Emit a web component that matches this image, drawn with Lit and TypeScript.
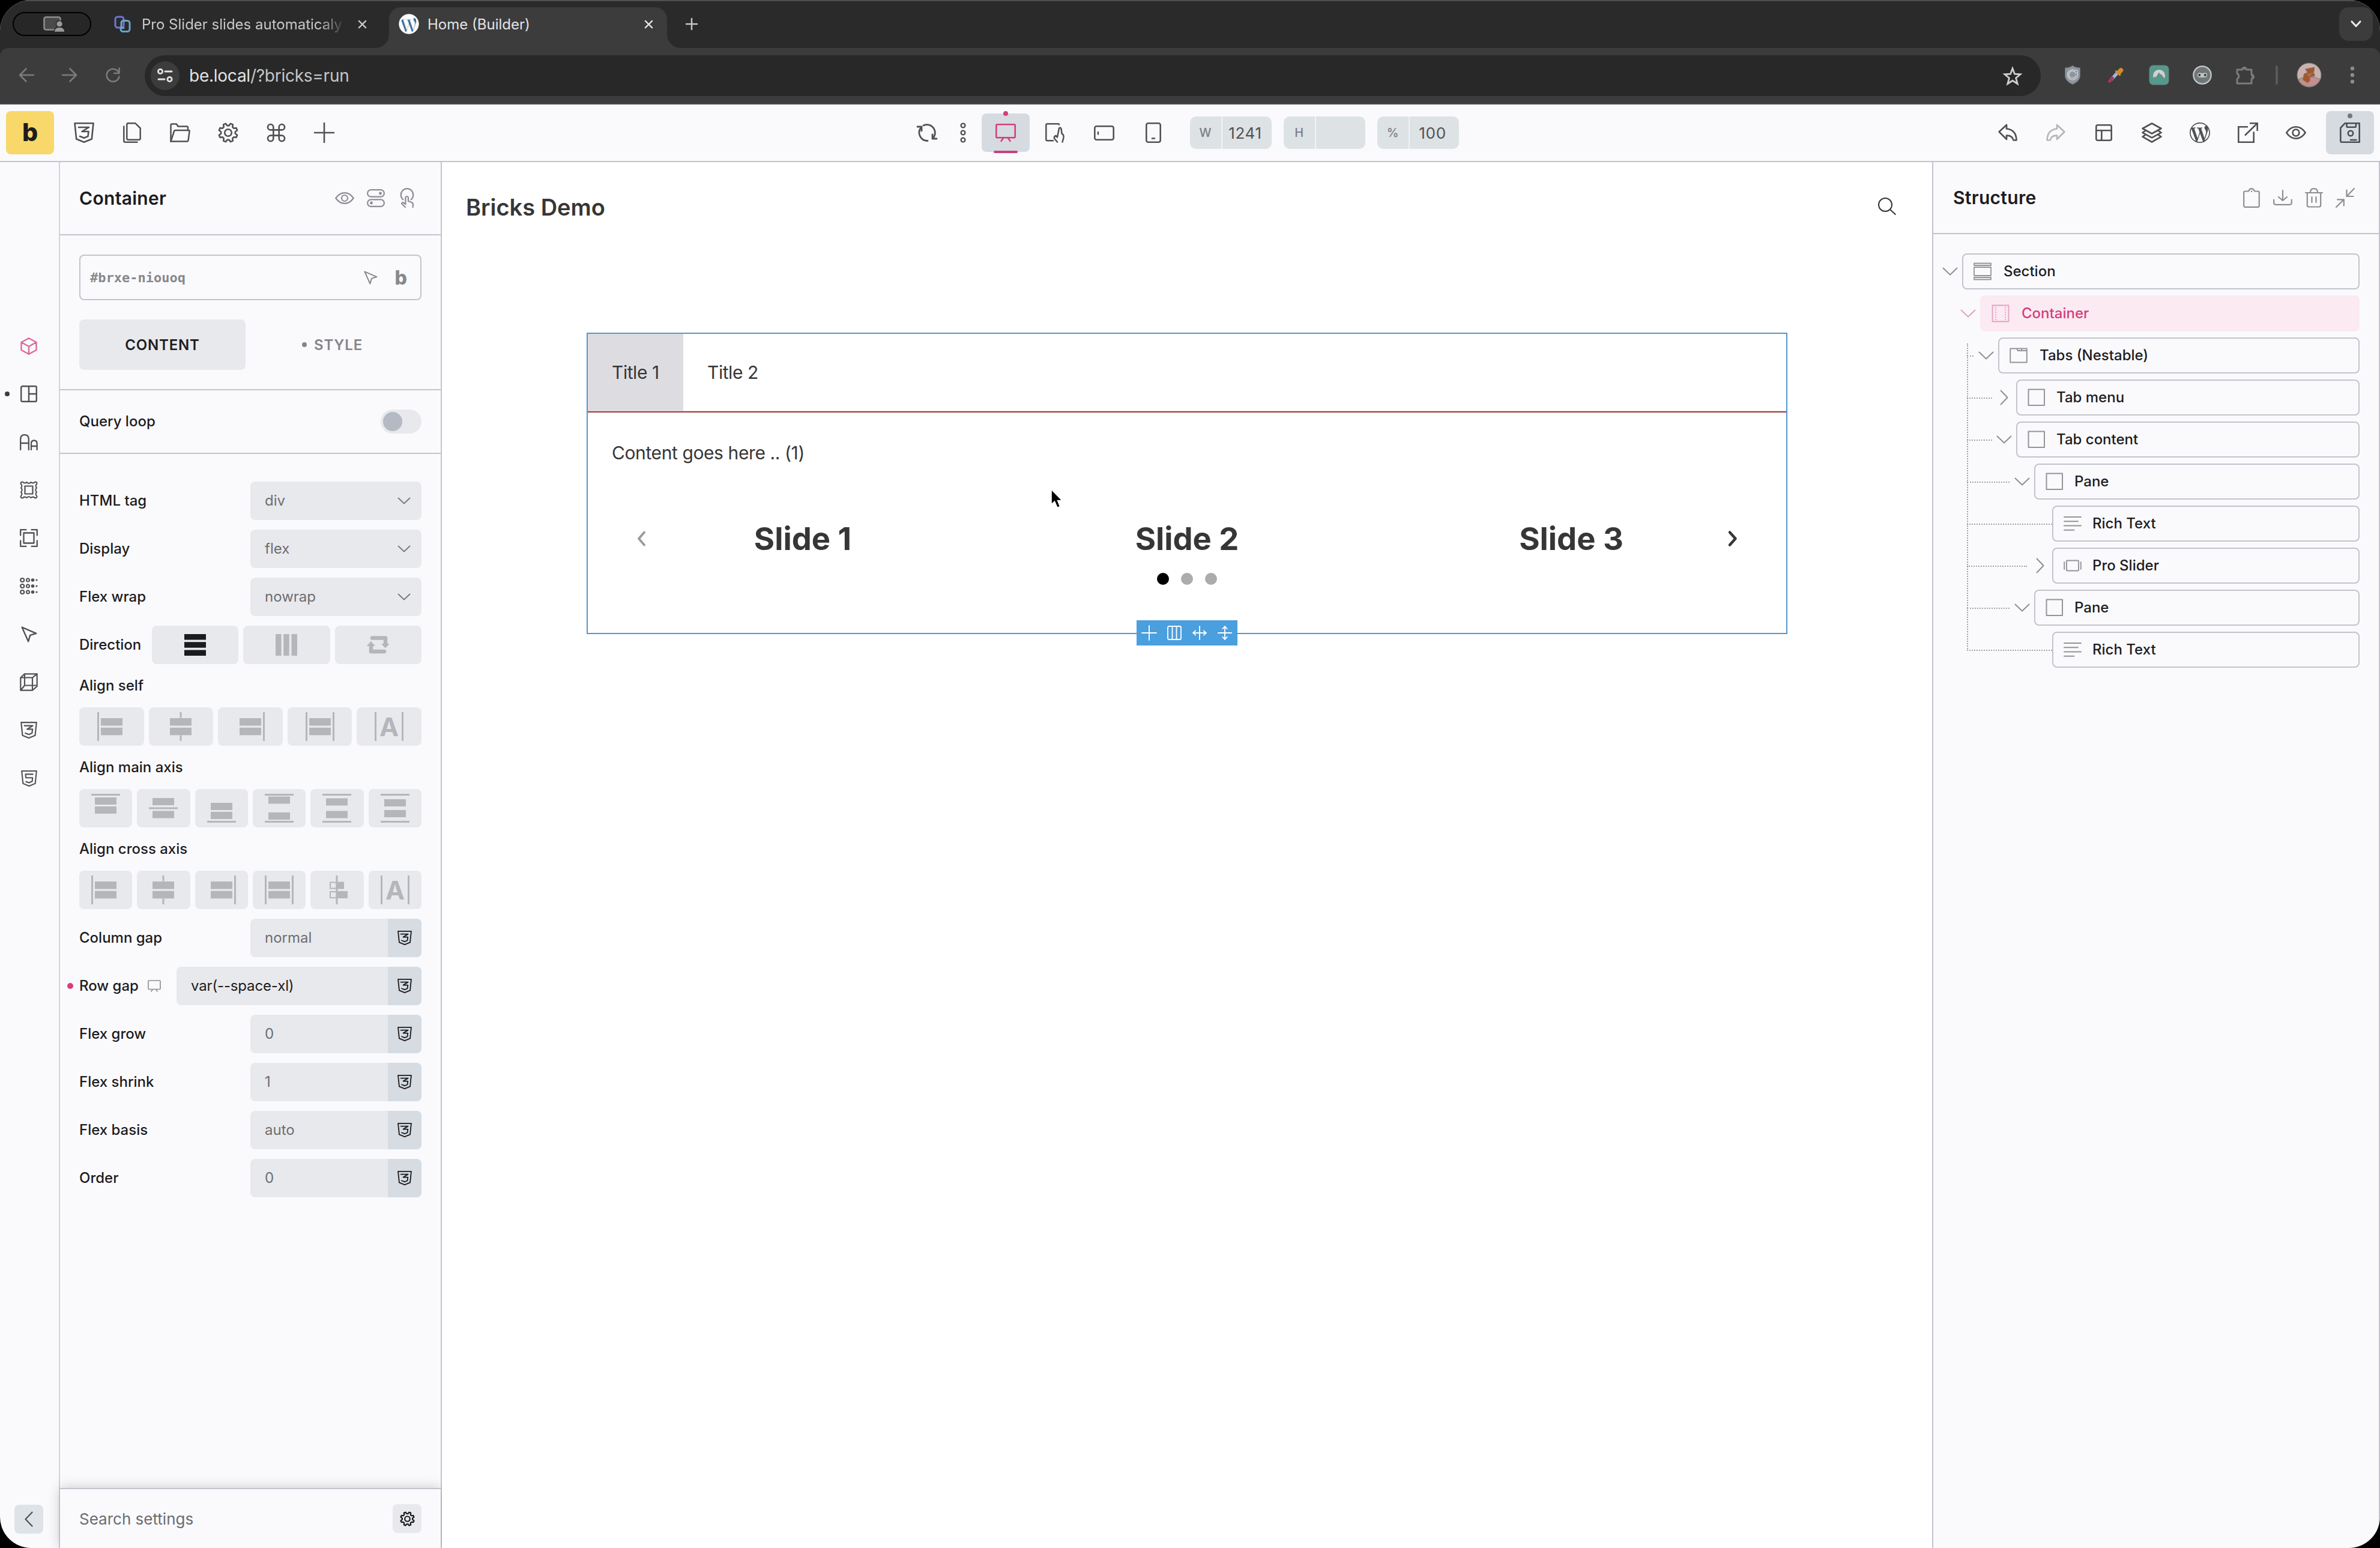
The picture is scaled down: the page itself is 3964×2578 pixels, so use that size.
import { LitElement, html, svg, css, nothing } from "lit";
import { customElement } from "lit/decorators.js";

type Glyph = [number, number, unknown];

/* Outline of a cog with rounded teeth, centred in a square box. */
const cog = (size: number, stroke: number) => {
  const c = size / 2;
  const outer = c - stroke / 2;
  const inner = outer - size * 0.11;
  const pts: string[] = [];
  for (let i = 0; i < 8; i++) {
    const a = (i * Math.PI) / 4 + Math.PI / 8;
    for (const [off, r] of [[-0.26, inner], [-0.13, outer], [0.13, outer], [0.26, inner]]) {
      pts.push(`${(c + Math.cos(a + off) * r).toFixed(2)} ${(c + Math.sin(a + off) * r).toFixed(2)}`);
    }
  }
  return svg`<path d="M${pts.join("L")}Z" stroke-width=${stroke}/><circle cx=${c} cy=${c} r=${size * 0.17} stroke-width=${stroke}/>`;
};

const WP = "M21.469 6.825c.84 1.537 1.318 3.3 1.318 5.175 0 3.979-2.156 7.456-5.363 9.325l3.295-9.527c.615-1.54.82-2.771.82-3.864 0-.405-.026-.78-.07-1.11m-7.981.105c.647-.03 1.232-.105 1.232-.105.582-.075.514-.93-.067-.899 0 0-1.755.135-2.88.135-1.064 0-2.85-.15-2.85-.15-.585-.03-.661.855-.075.885 0 0 .54.061 1.125.09l1.68 4.605-2.37 7.08L5.354 6.9c.649-.03 1.234-.1 1.234-.1.585-.075.516-.93-.065-.896 0 0-1.746.138-2.874.138-.2 0-.438-.008-.69-.015C4.911 3.15 8.235 1.215 12 1.215c2.809 0 5.365 1.072 7.286 2.833-.046-.003-.091-.009-.141-.009-1.06 0-1.812.923-1.812 1.914 0 .89.513 1.643 1.06 2.531.411.72.89 1.643.89 2.977 0 .915-.354 1.994-.821 3.479l-1.075 3.585-3.9-11.61.001.014zM12 22.784c-1.059 0-2.081-.153-3.048-.437l3.237-9.406 3.315 9.087c.024.053.05.101.078.149-1.12.393-2.325.609-3.582.609M1.211 12c0-1.564.336-3.05.935-4.39L7.29 21.709C3.694 19.96 1.212 16.271 1.211 12M12 0C5.385 0 0 5.385 0 12s5.385 12 12 12 12-5.385 12-12S18.615 0 12 0";

const ICONS: Record<string, Glyph> = {
  screen: [36, 26, svg`<rect x="1.5" y="1.5" width="27" height="21" rx="3" fill="#4a4a4a" stroke="#8e8e8e" stroke-width="2.5"/><circle cx="27" cy="13" r="5.5" fill="#9a9a9a" stroke="#272727" stroke-width="1.5"/><path d="M18 26.5c0-6 4-8.500 9-8.500s9 2.500 9 8.500z" fill="#9a9a9a" stroke="#272727" stroke-width="1.500"/>`],
  favicon: [28, 28, svg`<rect x="2" y="2" width="14" height="18" rx="4" stroke="#6f74d8" stroke-width="3"/><path d="M12 20v-8a3.500 3.500 0 0 1 3.500-3.500h6.500a4 4 0 0 1 4 4v10a4 4 0 0 1-4 4h-7a4 4 0 0 1-4-4v-2h5" stroke="#6ea3c8" stroke-width="3"/>`],
  wpBlue: [32, 32, svg`<circle cx="16" cy="16" r="16" fill="#fff"/><g transform="scale(1.3333)"><path d=${WP} fill="#2f6fa3"/></g><circle cx="16" cy="16" r="15" stroke="#fff" stroke-width="2"/>`],
  close: [16, 16, svg`<path d="M2 2L14 14M14 2L2 14" stroke-width="2.500"/>`],
  plusSm: [20, 20, svg`<path d="M10 1V19M1 10H19" stroke-width="2.500"/>`],
  back: [26, 24, svg`<path d="M25 12H2.500M12.500 1.500L2 12L12.500 22.500" stroke-width="2.600"/>`],
  forward: [26, 24, svg`<path d="M1 12H23.500M13.500 1.500L24 12L13.500 22.500" stroke-width="2.600"/>`],
  reload: [26, 26, svg`<path d="M23 9.500A10.500 10.500 0 1 0 23.500 15.500M23.500 1.500V10H15" stroke-width="2.600"/>`],
  tune: [26, 24, svg`<circle cx="5" cy="5" r="3.600" stroke-width="2.800"/><path d="M13 5H24M2 18H12" stroke-width="3"/><circle cx="20.500" cy="18" r="3.600" stroke-width="2.800"/>`],
  chevTop: [18, 12, svg`<path d="M2 2L9 9.500L16 2" stroke-width="3.200"/>`],
  star: [32, 31, svg`<path d="M16 3L19.500 12.200L29 12.800L21.600 19L24.200 28.500L16 23.200L7.800 28.500L10.400 19L3 12.800L12.500 12.200Z" stroke-width="2.800" stroke-linejoin="miter"/>`],
  shield: [26, 32, svg`<path d="M13 0.500C17 3 21 4 25.500 4V17C25.500 24 19 29 13 31.500C7 29 .5 24 .5 17V4C5 4 9 3 13 .5Z" fill="#8f959c" stroke="#6c7279" stroke-width="1"/><circle cx="13" cy="15.500" r="8.500" stroke="#c9ced4" stroke-width="1.600"/><path d="M17 11A6 6 0 1 0 18.500 17" stroke="#c9ced4" stroke-width="1.600"/><circle cx="19" cy="10.500" r="2.400" fill="#8f959c" stroke="#c9ced4" stroke-width="1.200"/>`],
  dropper: [28, 28, svg`<path d="M6 22L16 11" stroke="#9db8e6" stroke-width="5.500" stroke-linecap="butt"/><path d="M3.500 24.500L8.500 19" stroke="#a8365a" stroke-width="5"/><path d="M19 9.500L22.500 6" stroke="#d08b31" stroke-width="7.500"/><path d="M14.500 8L20.500 13.500" stroke="#d08b31" stroke-width="3.500"/>`],
  nord: [32, 32, svg`<rect width="32" height="32" rx="6" fill="#529a8b"/><path d="M7 22.500A12 12 0 0 1 5.500 17A10.500 10.500 0 0 1 26.500 17A12 12 0 0 1 25 22.500L19 14.500L17.500 17L16 12L10.500 21L9 19Z" fill="#cfd3d1"/>`],
  ninja: [32, 32, svg`<circle cx="16" cy="16" r="14.700" fill="#6d7679" stroke="#c7c9c9" stroke-width="2.200"/><path d="M7.500 16c0-3 2-4.200 4.500-4.200 1.500 0 2.500 1 4 1s2.500-1 4-1c2.500 0 4.500 1.200 4.500 4.200 0 2.500-1.500 4.200-4 4.200h-9c-2.500 0-4-1.700-4-4.200z" fill="#c7c9c9"/><circle cx="11.300" cy="16" r="1.900" fill="#222"/><circle cx="20.700" cy="16" r="1.900" fill="#222"/>`],
  puzzle: [34, 34, svg`<path d="M3 8H11.500A3.500 3.500 0 0 1 18.500 8H27V16.500A3.500 3.500 0 0 1 27 23.500V31H3V23.500A5 5 0 0 0 3 14.500Z" stroke-width="3"/><path d="M11.500 7A3.800 3.800 0 0 1 18.500 7ZM28 15.500A3.800 3.800 0 0 1 28 23Z" fill="currentColor" stroke-width="1"/>`],
  avatar: [40, 40, svg`<circle cx="20" cy="20" r="20" fill="#c9b2ae"/><path d="M1.500 27A20 20 0 0 0 38.500 27Q20 18 1.500 27Z" fill="#c48f8c"/><path d="M14 10L29 7L27.500 17L30 21L21 24L21.500 29L17.500 33L9.500 28L11.500 18L17 16Z" fill="#a9552b"/><path d="M17 19L26 16L20 23Z" fill="#c56d33"/>`],
  kebab: [8, 30, svg`<g fill="#8c8c8c" stroke="none"><circle cx="4" cy="4" r="3.200"/><circle cx="4" cy="15" r="3.200"/><circle cx="4" cy="26" r="3.200"/></g>`],

  css3: [34, 34, svg`<path d="M1.500 1.300H32.500L29.800 27.500L17 32.700L4.200 27.500Z" stroke-width="2.600"/><path d="M8 8H25L13.500 15H24.500L23.500 23L17 25.800L10 23" stroke-width="2.600"/>`],
  html5: [34, 34, svg`<path d="M1.500 1.300H32.500L29.800 27.500L17 32.700L4.200 27.500Z" stroke-width="2.600"/><path d="M25 8H9.500L10.200 15.500H24.200L23.500 23L17 25.800L10.500 23.500" stroke-width="2.600"/>`],
  pages: [30, 34, svg`<path d="M8.500 1.300H20.500L28.700 9.500V26.500Q28.700 28.700 26.500 28.700H8.500Q6.300 28.700 6.300 26.500V3.500Q6.300 1.300 8.500 1.300Z" stroke-width="2.500"/><path d="M1.300 6.500V30.500Q1.300 32.700 3.500 32.700H23.500" stroke-width="2.500"/>`],
  folder: [34, 32, svg`<path d="M1.500 30.500V3.500Q1.500 1.500 3.500 1.500H11L13.500 5.500H28Q30 5.500 30 7.500V12" stroke-width="2.500"/><path d="M1.500 30.500L7 13.500Q7.500 12 9 12H31.500Q33 12 32.600 13.500L30.500 29Q30.200 30.500 28.500 30.500Z" stroke-width="2.500"/>`],
  gear: [34, 34, cog(34, 2.600)],
  gearSm: [25, 25, cog(25, 2.200)],
  cmd: [30, 32, svg`<g transform="translate(-3.700 -2.700) scale(1.560)"><path d="M15 6v12a3 3 0 1 0 3-3H6a3 3 0 1 0 3 3V6a3 3 0 1 0-3 3h12a3 3 0 1 0-3-3" stroke-width="1.700"/></g>`],
  plus: [34, 34, svg`<path d="M17 0V34M0 17H34" stroke-width="2.600" stroke-linecap="butt"/>`],
  refresh: [34, 32, svg`<path d="M7.500 7A13.500 13.500 0 0 0 18 29.500M11 3.900A13.500 13.500 0 0 1 26.500 25.500" stroke-width="2.800"/><path d="M1 6H8V13M33 26H26V19" stroke-width="2.800"/>`],
  dots3: [10, 34, svg`<g stroke-width="2.400"><circle cx="5" cy="5" r="3.400"/><circle cx="5" cy="17" r="3.400"/><circle cx="5" cy="29" r="3.400"/></g>`],
  desktop: [34, 30, svg`<rect x="1.300" y="1.300" width="31.400" height="22" rx="1.800" stroke-width="2.600"/><path d="M13 24L9.500 29M21 24L24.500 29" stroke-width="2.400"/>`],
  tabletTouch: [32, 33, svg`<path d="M23 2.500Q23 1.300 21.500 1.300H3.500Q1.300 1.300 1.300 3.500V27Q1.300 29.300 3.500 29.300H13" stroke-width="2.500"/><path d="M20 31.500L15 25.500Q14 22.500 17.500 21L20 23.500L23 8.500Q25.500 6.500 26.500 9.500L27.500 17.500Q31 19 30.500 24L28.500 31.500" stroke-width="2.500"/>`],
  landscape: [34, 25, svg`<rect x="1.300" y="1.300" width="31.400" height="22.400" rx="3" stroke-width="2.600"/><path d="M7 11V14.500" stroke-width="2.400"/>`],
  phone: [26, 34, svg`<rect x="1.300" y="1.300" width="23.400" height="31.400" rx="3" stroke-width="2.600"/><path d="M11 26.500H15" stroke-width="2.600"/>`],
  undo: [32, 30, svg`<path d="M1.600 13.500L14 2V8.500C24 9 30.600 16 30.400 27.500H25.500C24 22 20 19.500 14 19.700V26Z" stroke-width="2.700"/>`],
  redo: [32, 30, svg`<path d="M30.400 13.500L18 2V8.500C8 9 1.400 16 1.600 27.500H6.500C8 22 12 19.500 18 19.700V26Z" stroke-width="2.700"/>`],
  layout: [28, 28, svg`<rect x="1.300" y="1.300" width="25.400" height="25.400" rx="2.500" stroke-width="2.600"/><path d="M1.300 10.200H26.700M10.300 10.200V26.700" stroke-width="2.600"/>`],
  layers: [34, 34, svg`<path d="M17 1.500L32.500 10L17 18.500L1.500 10Z" stroke-width="2.600"/><path d="M6.500 13.500L1.500 16.800L17 25.300L32.500 16.800L27.500 13.500M6.500 20.500L1.500 23.700L17 32.500L32.500 23.700L27.500 20.500" stroke-width="2.600"/>`],
  wp: [34, 34, svg`<g transform="scale(1.4167)"><path d=${WP} fill="currentColor" stroke="none"/></g>`],
  external: [34, 34, svg`<path d="M17 7.300H1.300V32.700H26.700V15.500M20 1.300H32.700V14M32.500 1.500L12 21.500" stroke-width="2.600" stroke-linejoin="miter" stroke-linecap="butt"/>`],
  eye: [34, 22, svg`<path d="M1.300 11C6 4 11 1.300 17 1.300S28 4 32.700 11C28 18 23 20.700 17 20.700S6 18 1.300 11Z" stroke-width="2.600"/><circle cx="17" cy="11" r="5.500" stroke-width="2.600"/>`],
  save: [34, 34, svg`<path d="M8.500 1.300H32.700V32.700H3.500Q1.300 32.700 1.300 30.500V9Z" stroke-width="2.600"/><path d="M11.500 1.500V6Q11.500 7.800 13.500 7.800H25Q27 7.800 27 6V1.500M18 29H27.500" stroke-width="2.600"/><circle cx="18" cy="18" r="4.200" stroke-width="2.600"/>`],

  eyeSm: [32, 20, svg`<path d="M1.200 10C5.500 4 10.500 1.200 16 1.200S26.500 4 30.800 10C26.500 16 21.500 18.800 16 18.800S5.500 16 1.200 10Z" stroke-width="2.200"/><circle cx="16" cy="10" r="5" stroke-width="2.200"/>`],
  toggles: [30, 30, svg`<rect x="1.100" y="1.100" width="27.800" height="11.600" rx="5.800" stroke-width="2.200"/><rect x="1.100" y="17.300" width="27.800" height="11.600" rx="5.800" stroke-width="2.200"/><circle cx="22.500" cy="7" r="2.400" fill="currentColor" stroke="none"/><circle cx="7.500" cy="23" r="2.400" fill="currentColor" stroke="none"/>`],
  tap: [24, 32, svg`<path d="M5.500 18.500A10.300 10.300 0 1 1 18.500 18.500" stroke-width="2.200"/><path d="M9 31L3 25Q3.500 22.500 6 23.500L9.500 26V14.500Q12 11.500 14 14.500V21L19.500 23Q22.500 24.500 22 27.500L21.500 31" stroke-width="2.200"/>`],
  cursor: [24, 24, svg`<path d="M1.500 1.500L22.500 10.500L13.500 13.200L10.800 22.500Z" stroke-width="2.100"/>`],
  chevDown: [22, 12, svg`<path d="M1.500 1.500L11 10.500L20.500 1.500" stroke-width="1.800"/>`],
  treeDown: [26, 14, svg`<path d="M1.500 1.500L13 12.500L24.500 1.500" stroke-width="2"/>`],
  treeRight: [14, 26, svg`<path d="M1.500 1.500L12.500 13L1.500 24.500" stroke-width="2"/>`],
  railBack: [14, 26, svg`<path d="M12.500 1.500L1.500 13L12.500 24.500" stroke-width="2.200"/>`],
  monitor: [22, 20, svg`<rect x="1" y="1" width="20" height="14.500" rx="1" stroke-width="1.700"/><path d="M8 16L6 19M14 16L16 19" stroke-width="1.700"/>`],

  cube: [28, 29, svg`<path d="M14 1.300L26.500 8V21L14 27.700L1.500 21V8ZM1.500 8L14 15L26.500 8M14 15V27.700" stroke-width="2.400"/>`],
  grid: [28, 28, svg`<rect x="1.200" y="1.200" width="25.600" height="25.600" rx="2" stroke-width="2.400"/><path d="M14 1.200V26.800M14 14H26.800" stroke-width="2.400"/>`],
  type: [30, 27, svg`<path d="M1.200 26V8.500Q1.200 1.200 8 1.200T14.800 8.500V26M1.200 15H14.800M19 26V15.500Q19 10.500 23.800 10.500T28.600 15.500V26M19 20H28.600" stroke-width="2.300"/>`],
  stamp: [30, 30, svg`<path d="M4.500 1.500Q8 5 11.500 2Q15 6 18.500 2Q22 5 25.500 1.500Q28.500 1.500 28.500 4.500Q25 8 28 11.500Q24.500 15 28 18.500Q25 22 28.500 25.500Q28.500 28.500 25.500 28.500Q22 25 18.500 28Q15 24.500 11.500 28Q8 25 4.500 28.500Q1.500 28.500 1.500 25.500Q5 22 2 18.500Q5.500 15 2 11.500Q5 8 1.500 4.500Q1.500 1.500 4.500 1.500Z" stroke-width="2"/><rect x="8.500" y="8.500" width="13" height="13" stroke-width="2.200"/>`],
  frame: [30, 30, svg`<path d="M1.200 10.500V1.200H10.500M19.500 1.200H28.800V10.500M28.800 19.500V28.800H19.500M10.500 28.800H1.200V19.500" stroke-width="2.300"/><rect x="6.500" y="6.500" width="17" height="17" stroke-width="2.300"/>`],
  dotGrid: [30, 28, svg`${[4, 14, 24].map((y) => svg`<circle cx="4.200" cy=${y} r="3" stroke-width="2.200"/><circle cx="13.500" cy=${y} r="2.500" stroke-width="2"/><circle cx="21.500" cy=${y} r="2.800" fill="currentColor" stroke="none"/><circle cx="28" cy=${y} r="1.600" fill="currentColor" stroke="none"/>`)}`],
  box3d: [30, 30, svg`<path d="M1.300 7.500H21V28.700H1.300ZM1.300 7.500L8 1.300H28.700V22L21 28.700M21 7.500L28.700 1.300M8 1.300V20.500H28.500M8 20.500L1.300 28.700" stroke-width="2.200"/>`],

  clipboard: [28, 33, svg`<path d="M3.500 5.500H8.500C9.500 5.500 10 1.200 14 1.200S18.500 5.500 19.500 5.500H24.500Q26.800 5.500 26.800 7.500V29.500Q26.800 31.800 24.500 31.800H3.500Q1.200 31.800 1.200 29.500V7.500Q1.200 5.500 3.500 5.500Z" stroke-width="2.200"/><circle cx="14" cy="5.800" r="1.300" fill="currentColor" stroke="none"/>`],
  download: [32, 26, svg`<path d="M16 1V17.500M9 12L16 18L23 12M1.200 16.500V21.500Q1.200 24.800 4.500 24.800H27.500Q30.800 24.800 30.800 21.500V16.500" stroke-width="2.200"/>`],
  trash: [30, 33, svg`<path d="M1 8H29M3.800 8V28.500Q3.800 31.500 6.500 31.500H23.500Q26.200 31.500 26.200 28.500V8M9 7.500C9 3 11.500 1.200 15 1.200S21 3 21 7.500M11.500 15V24M18.500 15V24" stroke-width="2.200"/>`],
  collapse: [32, 33, svg`<path d="M31 1L19 13.500M18.500 3.500V14H29.500M1 32L13.500 19.500M3 19.300H13.800V29.500" stroke-width="2.200" stroke-linejoin="miter"/>`],
  search: [30, 29, svg`<circle cx="12" cy="12" r="11" stroke-width="2"/><path d="M20 20L28.800 28" stroke-width="2"/>`],

  elSection: [32, 30, svg`<rect x="1" y="1.500" width="28" height="3.500" stroke-width="1.800"/><rect x="1" y="8" width="28" height="14" stroke-width="1.800"/><rect x="1" y="25" width="28" height="3.500" stroke-width="1.800"/>`],
  elContainer: [32, 30, svg`<rect x="1.500" y="1.500" width="27" height="27" stroke-width="1.800"/><path d="M7 4V27M23 4V27" stroke-width="1.800" stroke-dasharray="2 2" stroke-linecap="butt"/>`],
  elTabs: [32, 26, svg`<path d="M1.200 1.500H12L13.500 5H28.800V24.500H1.200ZM12 1.500H28.800V5M20 1.500V5" stroke-width="1.900"/>`],
  elBlock: [30, 30, svg`<rect x="1.500" y="1.500" width="26.500" height="26.500" stroke-width="2"/>`],
  elText: [30, 26, svg`<path d="M1 2H29M1 9.300H24M1 16.500H29M1 23.800H17.500" stroke-width="1.900"/>`],
  elSlider: [30, 20, svg`<rect x="5" y="1.500" width="20" height="17" rx="1" stroke-width="1.900"/><path d="M1.200 4V16M28.800 4V16" stroke-width="1.900"/>`],

  rows: [36, 36, svg`<g fill="currentColor" stroke="none"><rect width="36" height="9.500"/><rect y="13.200" width="36" height="9.500"/><rect y="26.500" width="36" height="9.500"/></g>`],
  cols: [36, 36, svg`<g fill="currentColor" stroke="none"><rect width="9.500" height="36"/><rect x="13.200" width="9.500" height="36"/><rect x="26.500" width="9.500" height="36"/></g>`],
  swap: [36, 32, svg`<path d="M8 4.500H30V16M28 27H6V17" stroke-width="6.500"/><path d="M24 14.500H36L30 20.500ZM0 17.500H12L6 10.500Z" fill="currentColor" stroke-width="1"/>`],

  tbPlus: [26, 26, svg`<path d="M13 0V26M0 13H26" stroke-width="2"/>`],
  tbCols: [24, 24, svg`<rect x="1" y="1" width="22" height="22" rx="2" stroke-width="1.800"/><path d="M8.500 1V23M15.500 1V23" stroke-width="1.800"/>`],
  tbH: [26, 26, svg`<path d="M13 1V25M1 13H25M5.500 9L1.500 13L5.500 17M20.500 9L24.500 13L20.500 17" stroke-width="2"/>`],
  tbV: [26, 26, svg`<path d="M1 13H25M13 1V25M9 5.500L13 1.500L17 5.500M9 20.500L13 24.500L17 20.500" stroke-width="2"/>`],
  slidePrev: [14, 26, svg`<path d="M12 2.500L3 13L12 23.500" stroke-width="3.800"/>`],
  slideNext: [16, 26, svg`<path d="M3 2.500L12.500 13L3 23.500" stroke-width="4.500"/>`],
};

const icon = (name: string, w?: number) => {
  const [vw, vh, body] = ICONS[name];
  const width = w ?? vw;
  return html`<svg class="ico" width=${width} height=${(width * vh) / vw} viewBox="0 0 ${vw} ${vh}" fill="none" stroke="currentColor" stroke-linecap="round" stroke-linejoin="round">${body}</svg>`;
};

/* Alignment glyphs: filled blocks and guide lines, given as [x, y, w, h] on a 48px square. */
type Rect = [number, number, number, number];
const ALIGN: Record<string, Rect[]> = {
  start: [[0, 0, 3, 48], [6, 10, 36, 12.500], [6, 25.800, 36, 12.500]],
  center: [[22.500, 0, 3, 9.500], [22.500, 38.500, 3, 9.500], [6, 10, 36, 12.500], [6, 25.800, 36, 12.500]],
  end: [[45, 0, 3, 48], [6, 10, 36, 12.500], [6, 25.800, 36, 12.500]],
  stretch: [[0, 0, 3, 48], [45, 0, 3, 48], [6, 10, 36, 12.500], [6, 25.800, 36, 12.500]],
  letter: [[0, 0, 3, 48], [45, 0, 3, 48]],
  top: [[0, 0, 48, 3], [6, 6, 36, 12], [6, 21, 36, 12]],
  middle: [[0, 22.500, 48, 3], [6, 7, 36, 12], [6, 28.500, 36, 12]],
  bottom: [[0, 45, 48, 3], [6, 15, 36, 12], [6, 30, 36, 12]],
  between: [[0, 0, 48, 3], [0, 45, 48, 3], [6, 4.500, 36, 12], [6, 31, 36, 12]],
  around: [[0, 0, 48, 3], [0, 45, 48, 3], [6, 7.500, 36, 12], [6, 28.500, 36, 12]],
  evenly: [[0, 0, 48, 3], [0, 45, 48, 3], [6, 9, 36, 12], [6, 27, 36, 12]],
  baseline: [[22.500, 0, 3, 48], [24, 10.500, 12, 12], [24, 26, 18, 12]],
};
const alignIcon = (name: string) => html`<svg class="ico" width="48" height="48" viewBox="0 0 48 48">
  ${ALIGN[name].map(([x, y, w, h]) => svg`<rect x=${x} y=${y} width=${w} height=${h} fill="#b4b6ba"/>`)}
  ${name === "letter" ? svg`<text class="alpha" x="24" y="40" text-anchor="middle">A</text>` : nothing}
  ${name === "baseline" ? svg`<g fill="none" stroke="#b4b6ba" stroke-width="2"><rect x="13" y="11.500" width="10.500" height="10"/><rect x="13" y="27" width="10.500" height="10"/></g>` : nothing}
</svg>`;

interface Node { depth: number; label: string; icon: string; open?: boolean; active?: boolean; }
const TREE: Node[] = [
  { depth: 0, label: "Section", icon: "elSection", open: true },
  { depth: 1, label: "Container", icon: "elContainer", open: true, active: true },
  { depth: 2, label: "Tabs (Nestable)", icon: "elTabs", open: true },
  { depth: 3, label: "Tab menu", icon: "elBlock", open: false },
  { depth: 3, label: "Tab content", icon: "elBlock", open: true },
  { depth: 4, label: "Pane", icon: "elBlock", open: true },
  { depth: 5, label: "Rich Text", icon: "elText" },
  { depth: 5, label: "Pro Slider", icon: "elSlider", open: false },
  { depth: 4, label: "Pane", icon: "elBlock", open: true },
  { depth: 5, label: "Rich Text", icon: "elText" },
];

@customElement("app-root")
export class AppRoot extends LitElement {
  static styles = css`
    :host { display: block; width: 3964px; height: 2578px; background: #000; overflow: hidden;
      font-family: Inter, "Liberation Sans", sans-serif; font-size: 24px; color: #1c1c1e; }
    * { box-sizing: border-box; }
    .ico { display: block; flex: none; overflow: visible; }
    .window { height: 2578px; border-radius: 52px; overflow: hidden; display: flex; flex-direction: column; background: #fafafd; }

    .strip { height: 80px; flex: none; background: #2a2a2a; box-shadow: inset 0 2px 0 #4f4f4f; display: flex; align-items: center; color: #c8c8c8; padding: 0 12px 0 21px; }
    .pill { width: 131px; height: 40px; border: 2px solid #000; border-radius: 20px; background: #272727; display: flex; align-items: center; justify-content: center; padding-left: 6px; }
    .tab { display: flex; align-items: center; height: 68px; margin-top: 12px; padding-bottom: 12px; }
    .tab.idle { margin-left: 16px; width: 480px; padding-left: 22px; }
    .tab-title { margin-left: 18px; white-space: nowrap; }
    .idle .tab-title { width: 340px; -webkit-mask-image: linear-gradient(90deg, #000 296px, rgba(0,0,0,.15) 334px); }
    .idle .x { margin-left: 20px; }
    .tab.active { position: relative; width: 463px; background: #3c3c3c; border-radius: 20px 20px 0 0; padding-left: 17px; color: #e3e3e3; }
    .tab.active::before, .tab.active::after { content: ""; position: absolute; bottom: 0; width: 22px; height: 22px; }
    .tab.active::before { left: -22px; background: radial-gradient(circle at 0 0, transparent 21.5px, #3c3c3c 22px); }
    .tab.active::after { right: -22px; background: radial-gradient(circle at 100% 0, transparent 21.5px, #3c3c3c 22px); }
    .active .tab-title { margin-left: 15px; flex: 1; }
    .active .x { margin-right: 23px; }
    .new { margin-left: 31px; flex: 1; }
    .tab-menu { width: 56px; height: 56px; border-radius: 16px; background: #3c3c3c; display: flex; align-items: center; justify-content: center; color: #e8e8e8; }

    .nav-bg { flex: none; background: #2a2a2a; }
    .nav { height: 94px; background: #3c3c3c; border-radius: 14px 14px 0 0; border-bottom: 2px solid #484848; display: flex; align-items: center; color: #7b7b7b; padding: 0 0 2px 31px; }
    .nav .fw { margin-left: 46px; } .nav .rl { margin-left: 46px; }
    .omni { margin-left: 40px; margin-top: 2px; width: 3158px; height: 68px; border-radius: 34px; background: #282828; display: flex; align-items: center; padding-left: 10px; color: #c6c6c6; font-size: 28px; letter-spacing: -0.25px; }
    .site { width: 48px; height: 48px; border-radius: 50%; background: #3c3c3c; display: flex; align-items: center; justify-content: center; color: #e3e3e3; margin-right: 16px; }
    .host { color: #e3e3e3; }
    .url { flex: 1; }
    .star { margin-right: 31px; color: #cfcfcf; }
    .ext { display: flex; align-items: center; padding-left: 17px; }
    .ext > span { width: 72px; display: flex; justify-content: center; }
    .sep { width: 4px; height: 32px; border-radius: 2px; background: #5a5a5a; margin: 0 32px 0 14px; }
    .kb { margin-left: 48px; }

    .bar { height: 96px; flex: none; border-bottom: 2px solid #c3c4cc; display: flex; align-items: center; color: #505154; background: #fafafd; }
    .logo { width: 80px; height: 72px; margin: 0 10px; border-radius: 8px; background: #f8d86a; display: flex; align-items: center; justify-content: center; color: #1d1d1b; font-weight: 800; font-size: 41px; padding-bottom: 2px; }
    .btn { width: 80px; height: 64px; display: flex; align-items: center; justify-content: center; flex: none; }
    .mid { display: flex; align-items: center; margin-left: 924px; }
    .mid .dots { width: 40px; margin-right: 11px; }
    .mid .gap { margin-right: 2px; }
    .sel { position: relative; background: #d6dae1; border-radius: 8px; color: #d23f7c; }
    .sel::before { content: ""; position: absolute; width: 8px; height: 8px; border-radius: 50%; background: #d23f7c; left: 36px; top: -4px; }
    .sel::after { content: ""; position: absolute; width: 40px; height: 4px; border-radius: 2px; background: #c9407b; left: 20px; bottom: -2px; }
    .dims { display: flex; gap: 20px; margin-left: 21px; }
    .dim { width: 136px; height: 54px; border-radius: 10px; background: #dde2e5; display: flex; font-size: 26px; letter-spacing: 0.7px; }
    .dim b { width: 54px; display: flex; align-items: center; justify-content: center; font-weight: 500; font-size: 20px; color: #7c7f84; border-right: 2px solid #f1f3f5; }
    .dim span { flex: 1; display: flex; align-items: center; justify-content: center; padding-right: 6px; }
    .right { display: flex; margin-left: auto; margin-right: 10px; align-items: center; }
    .dis { color: #b5b6b9; }
    .saveb { position: relative; height: 72px; margin-left: 10px; background: #d6dae1; border-radius: 8px; color: #4b4e57; }
    .saveb::before { content: ""; position: absolute; width: 8px; height: 8px; border-radius: 50%; background: #74777e; left: 36px; top: 4px; }

    .body { flex: 1; min-height: 0; display: flex; }
    .rail { width: 100px; flex: none; border-right: 2px solid #d2d2dc; display: flex; flex-direction: column; align-items: center; padding: 266px 2px 24px 0; color: #505154; }
    .rail .r { height: 80px; width: 60px; display: flex; align-items: center; justify-content: center; position: relative; }
    .rail .pink { color: #da6a99; }
    .rail .has::before { content: ""; position: absolute; left: -10px; top: 36px; width: 8px; height: 8px; border-radius: 50%; background: #3d3e42; }
    .collapse { margin-top: auto; width: 48px; height: 48px; border-radius: 8px; background: #dde3e6; display: flex; align-items: center; justify-content: center; }

    .panel { width: 636px; flex: none; border-right: 2px solid #c3c4cc; display: flex; flex-direction: column; font-weight: 500; }
    .phead { height: 122px; flex: none; border-bottom: 2px solid #c3c4cc; padding: 0 30px 0 32px; display: flex; align-items: center; font-size: 30px; font-weight: 600; letter-spacing: 0.3px; }
    .acts { margin-left: auto; display: flex; align-items: center; color: #8d8e92; }
    .acts .slot { width: 52px; display: flex; justify-content: center; }
    .picker { border-bottom: 2px solid #c3c4cc; height: 258px; flex: none; padding: 32px 32px 0; }
    .selbox { height: 76px; border: 2px solid #c3c4cc; border-radius: 8px; display: flex; align-items: center; padding: 0 22px 0 16px; color: #87888b; }
    .mono { font-family: "DejaVu Sans Mono", "Liberation Mono", monospace; font-weight: 700; font-size: 22px; flex: 1; }
    .blogo { font-weight: 800; font-size: 32px; margin-left: 29px; }
    .tabs { display: flex; margin-top: 32px; height: 84px; font-weight: 600; letter-spacing: 0.8px; }
    .tabs div { border-radius: 8px; display: flex; align-items: center; justify-content: center; }
    .tabs .on { width: 277px; background: #e8e9ed; }
    .tabs .off { flex: 1; color: #85868a; padding-right: 4px; }
    .tabs .off::before { content: ""; width: 8px; height: 8px; border-radius: 50%; background: currentColor; margin-right: 12px; }
    .query { height: 106px; flex: none; border-bottom: 2px solid #c3c4cc; display: flex; align-items: center; justify-content: space-between; padding: 0 32px; }
    .val { padding-bottom: 2px; }
    .switch { width: 68px; height: 40px; border-radius: 20px; background: #e8e9ed; padding: 4px; }
    .knob { width: 32px; height: 32px; border-radius: 50%; background: #b3bac3; }
    .fields { flex: 1; padding: 46px 32px 0; display: flex; flex-direction: column; }
    .row { display: flex; height: 64px; margin-bottom: 16px; align-items: center; flex: none; position: relative; }
    .row.last { margin-bottom: 0; }
    .row .lab { flex: 1; display: flex; align-items: center; gap: 15px; color: #1c1c1e; }
    .row .lab .ico { color: #909195; }
    .box { width: 285px; height: 64px; border-radius: 8px; background: #e8e9ed; display: flex; align-items: center; padding-left: 24px; font-weight: 400; color: #6d6e72; overflow: hidden; }
    .box .ico { margin-left: auto; margin-right: 18px; color: #77787c; }
    .box.wide { width: 408px; color: #1c1c1e; }
    .box.wide .val { letter-spacing: -0.15px; }
    .cssb { margin-left: auto; width: 56px; height: 64px; background: #d7dbe2; display: flex; align-items: center; justify-content: center; }
    .cssb .ico { margin: 0; color: #1c1c1e; }
    .changed::before { content: ""; position: absolute; left: -20px; top: 27px; width: 10px; height: 10px; border-radius: 50%; background: #d83d7c; }
    .set { display: flex; gap: 8px; flex: none; }
    .set.last { margin-bottom: 16px; }
    .dir { width: 449px; }
    .opt { flex: 1; height: 64px; border-radius: 8px; background: #e8e9ed; display: flex; align-items: center; justify-content: center; color: #b4b6ba; }
    .opt.cur { color: #1a1b1f; }
    .block-lab { height: 72px; flex: none; display: flex; align-items: center; padding-bottom: 2px; }
    .alpha { font: 700 43px Inter, sans-serif; fill: #b4b6ba; stroke: none; }
    .foot { position: relative; height: 100px; flex: none; border-top: 2px solid #c3c4cc; background: #fafafd; box-shadow: 0 0 20px rgba(0,0,0,.2); display: flex; align-items: center; justify-content: space-between; padding: 0 32px; font-size: 26px; font-weight: 400; color: #6b6c70; }
    .footb { width: 48px; height: 48px; border-radius: 8px; background: #e8e9ed; display: flex; align-items: center; justify-content: center; color: #1c1c1e; }

    .canvas { flex: 1; min-width: 0; background: #fff; color: #363636; position: relative; }
    .site-head { display: flex; align-items: center; justify-content: space-between; padding: 0 60px 0 40px; height: 150px; font-size: 38px; font-weight: 600; }
    .site-head .ico { margin-bottom: 4px; }
    .frame { position: relative; margin: 134px 0 0 241px; width: 2000px; height: 502px; border: 2px solid #5398d0; display: flex; flex-direction: column; }
    .menu { display: flex; height: 131px; border-bottom: 2px solid #9c3f3d; box-shadow: inset 0 -1px 0 #f3c9c9; font-size: 30px; letter-spacing: -0.45px; }
    .menu div { padding: 0 40px; display: flex; align-items: center; white-space: nowrap; margin-bottom: 1px; }
    .menu .cur { background: #dddde1; width: 159px; }
    .rich { font-size: 30px; padding: 47px 40px 0; line-height: 40px; letter-spacing: -0.4px; }
    .slider { display: flex; align-items: center; margin: 91px 38px 0; height: 64px; position: relative; }
    .slide { flex: 1; text-align: center; font-weight: 700; font-size: 52.5px; }
    .arrow { position: absolute; }
    .arrow.p { left: 44px; color: #9a9a9a; } .arrow.n { right: 43px; color: #363636; }
    .bullets { display: flex; gap: 20px; justify-content: center; margin-top: 25px; }
    .bullets i { width: 20px; height: 20px; border-radius: 50%; background: #acacac; }
    .bullets i:first-child { background: #000; }
    .tools { position: absolute; left: 914px; bottom: -21px; height: 42px; width: 168px; background: #4a9fdf; color: #fff; display: flex; }
    .tools span { width: 42px; display: flex; align-items: center; justify-content: center; }
    .pointer { position: absolute; left: 1010px; top: 541px; }

    .structure { width: 746px; flex: none; border-left: 2px solid #c3c4cc; border-right: 2px solid #c3c4cc; font-weight: 500; }
    .shead { height: 120px; border-bottom: 2px solid #c3c4cc; padding: 0 30px 0 33px; display: flex; align-items: center; font-size: 30px; font-weight: 600; letter-spacing: 0.3px; }
    .tree { position: relative; padding: 32px 32px 0 0; display: flex; flex-direction: column; gap: 10px; }
    .trunk { position: absolute; left: 56px; top: 182px; height: 512px; border-left: 2px dotted #a2a3a8; }
    .node { height: 60px; display: flex; align-items: center; position: relative; }
    .branch { position: absolute; left: 56px; top: 30px; border-top: 2px dotted #a2a3a8; }
    .tw { width: 26px; margin-right: 7px; display: flex; justify-content: center; color: #8e8f93; }
    .nbox { flex: 1; height: 60px; border: 2px solid #c3c4cc; border-radius: 8px; display: flex; align-items: center; padding-left: 17px; background: #fafafd; }
    .nbox .ico { color: #939498; }
    .nlabel { margin-left: 18px; padding-bottom: 2px; }
    .act .nbox { background: #fbeaf2; border-color: #fbeaf2; color: #d23f7c; }
    .act .ico { color: #e6a0bf; }
  `;

  private chromeStrip() {
    return html`
      <div class="strip">
        <div class="pill">${icon("screen")}</div>
        <div class="tab idle">${icon("favicon")}<span class="tab-title">Pro Slider slides automaticaly</span><span class="x">${icon("close", 15)}</span></div>
        <div class="tab active">${icon("wpBlue")}<span class="tab-title">Home (Builder)</span><span class="x">${icon("close", 15)}</span></div>
        <span class="new">${icon("plusSm")}</span>
        <div class="tab-menu">${icon("chevTop")}</div>
      </div>
      <div class="nav-bg"><div class="nav">
        <span>${icon("back")}</span><span class="fw">${icon("forward")}</span><span class="rl">${icon("reload")}</span>
        <div class="omni"><span class="site">${icon("tune")}</span><span class="url"><span class="host">be.local</span>/?bricks=run</span><span class="star">${icon("star")}</span></div>
        <div class="ext">
          <span>${icon("shield")}</span><span>${icon("dropper")}</span><span>${icon("nord")}</span><span>${icon("ninja")}</span><span>${icon("puzzle")}</span>
          <div class="sep"></div>${icon("avatar")}<div class="kb">${icon("kebab")}</div>
        </div>
      </div></div>`;
  }

  private builderBar() {
    const b = (n: string, c = "") => html`<div class="btn ${c}">${icon(n)}</div>`;
    return html`<div class="bar">
      <div class="logo">b</div>
      ${["css3", "pages", "folder", "gear", "cmd", "plus"].map((n) => b(n))}
      <div class="mid">
        ${b("refresh")}${b("dots3", "dots")}${b("desktop", "sel gap")}${b("tabletTouch", "gap")}${b("landscape", "gap")}${b("phone")}
        <div class="dims">
          <div class="dim"><b>W</b><span>1241</span></div>
          <div class="dim"><b>H</b><span></span></div>
          <div class="dim"><b>%</b><span>100</span></div>
        </div>
      </div>
      <div class="right">
        ${b("undo")}${b("redo", "dis")}${["layout", "layers", "wp", "external", "eye"].map((n) => b(n))}${b("save", "saveb")}
      </div>
    </div>`;
  }

  private select(label: string, value: string) {
    return html`<div class="row"><span class="lab"><span class="val">${label}</span></span><div class="box"><span class="val">${value}</span>${icon("chevDown")}</div></div>`;
  }

  private unit(label: string, value: string, changed = false) {
    return html`<div class="row ${changed ? "changed" : ""}"><span class="lab"><span class="val">${label}</span>${changed ? icon("monitor") : nothing}</span>
      <div class="box ${changed ? "wide" : ""}"><span class="val">${value}</span><span class="cssb">${icon("css3", 24)}</span></div></div>`;
  }

  private group(label: string, names: string[], last = false) {
    return html`<div class="block-lab">${label}</div>
      <div class="set ${last ? "last" : ""}">${names.map((n) => html`<div class="opt">${alignIcon(n)}</div>`)}</div>`;
  }

  private settings() {
    const rail: [string, number, string][] = [["cube", 28, "pink"], ["grid", 28, "has"], ["type", 30, ""], ["stamp", 30, ""], ["frame", 30, ""], ["dotGrid", 30, ""], ["cursor", 27, ""], ["box3d", 30, ""], ["css3", 28, ""], ["html5", 27, ""]];
    return html`
      <div class="rail">
        ${rail.map(([n, w, c]) => html`<div class="r ${c}">${icon(n, w)}</div>`)}
        <div class="collapse">${icon("railBack")}</div>
      </div>
      <div class="panel">
        <div class="phead">Container<div class="acts">${["eyeSm", "toggles", "tap"].map((n) => html`<span class="slot">${icon(n)}</span>`)}</div></div>
        <div class="picker">
          <div class="selbox"><span class="mono">#brxe-niouoq</span>${icon("cursor", 23)}<span class="blogo">b</span></div>
          <div class="tabs"><div class="on">CONTENT</div><div class="off">STYLE</div></div>
        </div>
        <div class="query"><span class="val">Query loop</span><div class="switch"><div class="knob"></div></div></div>
        <div class="fields">
          ${this.select("HTML tag", "div")}${this.select("Display", "flex")}${this.select("Flex wrap", "nowrap")}
          <div class="row last"><span class="lab"><span class="val">Direction</span></span>
            <div class="set dir"><div class="opt cur">${icon("rows")}</div><div class="opt">${icon("cols")}</div><div class="opt">${icon("swap")}</div></div></div>
          ${this.group("Align self", ["start", "center", "end", "stretch", "letter"])}
          ${this.group("Align main axis", ["top", "middle", "bottom", "between", "around", "evenly"])}
          ${this.group("Align cross axis", ["start", "center", "end", "stretch", "baseline", "letter"], true)}
          ${this.unit("Column gap", "normal")}${this.unit("Row gap", "var(--space-xl)", true)}${this.unit("Flex grow", "0")}${this.unit("Flex shrink", "1")}${this.unit("Flex basis", "auto")}${this.unit("Order", "0")}
        </div>
        <div class="foot">Search settings<span class="footb">${icon("gearSm")}</span></div>
      </div>`;
  }

  private preview() {
    return html`<div class="canvas">
      <div class="site-head">Bricks Demo${icon("search")}</div>
      <div class="frame">
        <div class="menu"><div class="cur">Title 1</div><div>Title 2</div></div>
        <div class="rich">Content goes here .. (1)</div>
        <div class="slider">
          ${[1, 2, 3].map((n) => html`<div class="slide">Slide ${n}</div>`)}
          <span class="arrow p">${icon("slidePrev")}</span><span class="arrow n">${icon("slideNext")}</span>
        </div>
        <div class="bullets"><i></i><i></i><i></i></div>
        <div class="tools">${["tbPlus", "tbCols", "tbH", "tbV"].map((n) => html`<span>${icon(n, 24)}</span>`)}</div>
      </div>
      <svg class="pointer" width="30" height="42" viewBox="0 0 30 42"><path d="M5 4V29L10.500 24L15 34.500L19.500 32.500L15.500 22.500H23Z" fill="#000" stroke="#fff" stroke-width="1.600"/></svg>
    </div>`;
  }

  private structure() {
    return html`<div class="structure">
      <div class="shead">Structure<div class="acts">${["clipboard", "download", "trash", "collapse"].map((n) => html`<span class="slot">${icon(n)}</span>`)}</div></div>
      <div class="tree">
        <div class="trunk"></div>
        ${TREE.map((n) => {
          const left = 15 + n.depth * 30;
          const end = n.open === undefined ? left + 33 : n.depth === 2 ? 67 : left - 7 - (n.depth - 3);
          return html`<div class="node ${n.active ? "act" : ""}" style="padding-left:${left}px">
            ${n.depth > 1 ? html`<span class="branch" style="width:${end - 56}px"></span>` : nothing}
            <span class="tw">${n.open === undefined ? nothing : icon(n.open ? "treeDown" : "treeRight")}</span>
            <div class="nbox">${icon(n.icon)}<span class="nlabel">${n.label}</span></div>
          </div>`;
        })}
      </div>
    </div>`;
  }

  render() {
    return html`<div class="window">
      ${this.chromeStrip()}
      ${this.builderBar()}
      <div class="body">${this.settings()}${this.preview()}${this.structure()}</div>
    </div>`;
  }
}
